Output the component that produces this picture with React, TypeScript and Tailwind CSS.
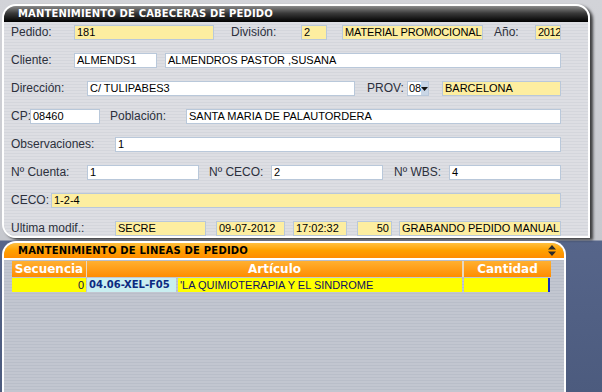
const stripes =
  "bg-[repeating-linear-gradient(180deg,#dddee3_0px,#dddee3_2px,#d4d6dc_2px,#d4d6dc_3px)]";

function Label({ w, ml = 0, children }: { w: number; ml?: number; children: React.ReactNode }) {
  return (
    <span
      className="shrink-0 text-[12px] leading-[15px] text-[#2c303c] whitespace-nowrap"
      style={{ width: w, marginLeft: ml }}
    >
      {children}
    </span>
  );
}

function Field({
  w,
  ml = 0,
  yellow,
  right,
  tight,
  children,
}: {
  w: number;
  ml?: number;
  yellow?: boolean;
  right?: boolean;
  tight?: boolean;
  children?: React.ReactNode;
}) {
  return (
    <span
      className={
        "shrink-0 h-[15px] border border-[#b9c8da] text-[11px] leading-[13px] text-black whitespace-nowrap overflow-hidden " +
        (yellow ? "bg-[#fdeea0] " : "bg-white ") +
        (right ? "text-right pr-[2px] " : "pl-[2px] ") +
        (tight ? "pl-[1px] tracking-[-0.4px]" : "")
      }
      style={{ width: w, marginLeft: ml }}
    >
      {children}
    </span>
  );
}

function Row({ children }: { children: React.ReactNode }) {
  return <div className="flex items-start h-[28px]">{children}</div>;
}

export default function App() {
  return (
    <div
      className="w-[602px] h-[392px] overflow-hidden relative bg-[linear-gradient(180deg,#d2d3d8_0px,#c6c8ce_240px,#56658a_241px,#4c5b7e_392px)]"
      style={{ fontFamily: '"Liberation Sans", Arial, sans-serif' }}
    >
      {/* top panel */}
      <div className="ml-[2px] mt-[4px] w-[588px] h-[234px] border-2 border-white rounded-tl-[14px] rounded-tr-[14px] rounded-bl-[14px] overflow-hidden shadow-[3px_2px_3px_rgba(0,0,0,0.7)]">
        <div
          className="h-[16px] bg-[linear-gradient(180deg,#8a8a8a_0%,#3a3a3a_45%,#000_100%)] pl-[14px] text-[10px] leading-[16px] font-bold text-white tracking-[0.15px]"
          style={{ fontFamily: '"DejaVu Sans", Verdana, sans-serif' }}
        >
          MANTENIMIENTO DE CABECERAS DE PEDIDO
        </div>
        <div className={"h-full pl-[7px] pt-[3px] " + stripes}>
          <Row>
            <Label w={63}>Pedido:</Label>
            <Field w={140} yellow>181</Field>
            <Label w={70} ml={17}>División:</Label>
            <Field w={26} yellow>2</Field>
            <span
              className="shrink-0 w-[141px] ml-[15px] h-[15px] border border-[#b9c8da] bg-[#fdeea0] pl-[2px] text-[11px] leading-[13px] text-black whitespace-nowrap overflow-hidden tracking-[-0.15px]"
            >
              MATERIAL PROMOCIONAL RUSTICO
            </span>
            <Label w={41} ml={11}>Año:</Label>
            <Field w={26} yellow tight>2012</Field>
          </Row>
          <Row>
            <Label w={63}>Cliente:</Label>
            <Field w={83}>ALMENDS1</Field>
            <Field w={396} ml={8}>ALMENDROS PASTOR ,SUSANA</Field>
          </Row>
          <Row>
            <Label w={76}>Dirección:</Label>
            <Field w={268}>C/ TULIPABES3</Field>
            <Label w={40} ml={12}>PROV:</Label>
            <span className="shrink-0 w-[22px] h-[15px] border border-[#b9c8da] bg-white flex items-center text-[11px] leading-[13px]">
              <span className="pl-[1px]">08</span>
              <span className="flex-1 h-full bg-[#c9d6e6] flex items-center justify-center">
                <svg width="7" height="4" viewBox="0 0 7 4">
                  <path d="M0 0H7L3.5 4Z" fill="#111" />
                </svg>
              </span>
            </span>
            <Field w={119} ml={13} yellow>BARCELONA</Field>
          </Row>
          <Row>
            <Label w={19}>CP:</Label>
            <Field w={70}>08460</Field>
            <Label w={76} ml={10}>Población:</Label>
            <Field w={375}>SANTA MARIA DE PALAUTORDERA</Field>
          </Row>
          <Row>
            <Label w={104}>Observaciones:</Label>
            <Field w={446}>1</Field>
          </Row>
          <Row>
            <Label w={76}>Nº Cuenta:</Label>
            <Field w={112}>1</Field>
            <Label w={62} ml={10}>Nº CECO:</Label>
            <Field w={112}>2</Field>
            <Label w={55} ml={11}>Nº WBS:</Label>
            <Field w={112}>4</Field>
          </Row>
          <Row>
            <Label w={40}>CECO:</Label>
            <Field w={510} yellow>1-2-4</Field>
          </Row>
          <Row>
            <Label w={104}>Ultima modif.:</Label>
            <Field w={91} yellow>SECRE</Field>
            <Field w={69} ml={10} yellow>09-07-2012</Field>
            <Field w={54} ml={8} yellow>17:02:32</Field>
            <Field w={35} ml={10} yellow right>50</Field>
            <Field w={162} ml={7} yellow>GRABANDO PEDIDO MANUAL</Field>
          </Row>
        </div>
      </div>

      {/* bottom panel */}
      <div className="ml-[2px] mt-[3px] w-[564px] h-[160px] border-2 border-b-0 border-white rounded-tl-[14px] rounded-tr-[14px] overflow-hidden bg-[repeating-linear-gradient(180deg,#c2c6d0_0px,#c2c6d0_2px,#b9bec9_2px,#b9bec9_3px)]">
        <div className="h-[17px] border-b-2 border-white bg-[linear-gradient(180deg,#ffc040_0%,#ffa000_50%,#ff8c00_100%)] flex items-center pl-[14px] pr-[8px]">
          <span
            className="flex-1 text-[10px] font-bold text-black tracking-[0.2px]"
            style={{ fontFamily: '"DejaVu Sans", Verdana, sans-serif' }}
          >
            MANTENIMIENTO DE LINEAS DE PEDIDO
          </span>
          <svg width="8" height="11" viewBox="0 0 8 11">
            <path d="M0 4.5L4 0L8 4.5Z M0 6.5L4 11L8 6.5Z" fill="#2a2a2a" />
          </svg>
        </div>
        <div className="pl-[8px] pt-[1px]">
          <div
            className="flex h-[16px] text-[12px] leading-[16px] font-bold text-white"
            style={{ fontFamily: '"DejaVu Sans", Verdana, sans-serif' }}
          >
            <div className="w-[74px] text-center bg-[linear-gradient(180deg,#ffb030,#ff8c00)]">Secuencia</div>
            <div className="w-[1px] bg-[#e8d8c0]" />
            <div className="w-[375px] text-center bg-[linear-gradient(180deg,#ffb030,#ff8c00)]">Artículo</div>
            <div className="w-[2px] bg-[#e8d8c0]" />
            <div className="w-[87px] text-center bg-[linear-gradient(180deg,#ffb030,#ff8c00)]">Cantidad</div>
          </div>
          <div className="flex h-[14px] mt-[1px] text-[11px] leading-[14px]">
            <div className="w-[74px] bg-[#ffff00] text-right pr-[2px] text-[#101040]">0</div>
            <div className="w-[1px]" />
            <div
              className="w-[89px] bg-[#c9eef0] pl-[2px] font-bold text-[#0c2a80] text-[10px]"
              style={{ fontFamily: '"DejaVu Sans", Verdana, sans-serif' }}
            >
              04.06-XEL-F05
            </div>
            <div className="w-[2px]" />
            <div className="w-[284px] bg-[#ffff00] pl-[2px] text-[#101060]">'LA QUIMIOTERAPIA Y EL SINDROME</div>
            <div className="w-[2px]" />
            <div className="w-[86px] bg-[#ffff00] border-r-2 border-[#1030c0]" />
          </div>
        </div>
      </div>
    </div>
  );
}
